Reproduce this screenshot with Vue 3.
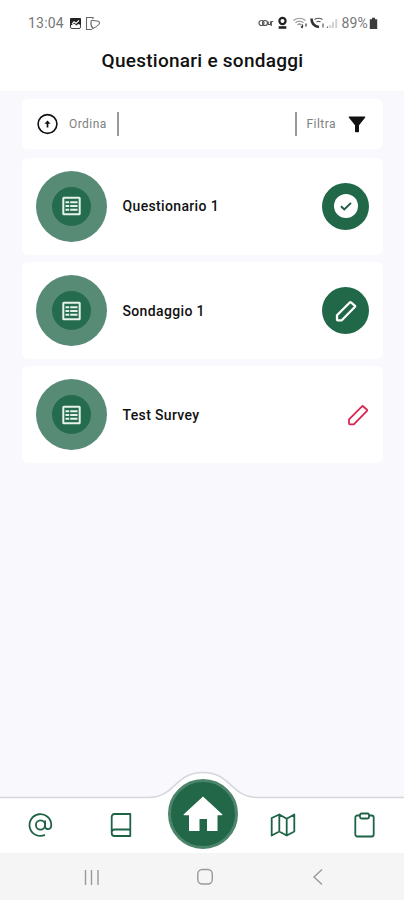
<script setup>
const surveys = [
  { id: 1, name: 'Questionario 1', status: 'done' },
  { id: 2, name: 'Sondaggio 1', status: 'open' },
  { id: 3, name: 'Test Survey', status: 'expired' }
]
</script>

<template>
  <div class="screen">
    <header class="top">
      <div class="status-bar">
        <div class="status-left">
          <span>13:04</span>
          <svg class="picture-icon" width="13" height="13" viewBox="0 0 13 13">
            <rect x="1.500" y="1.500" width="10" height="10" rx="1.500" fill="#fff" stroke="#444" />
            <path d="M1 2q0-1 1-1h9q1 0 1 1v6L9 7 7.500 8.500 5 6.500 1 9z" fill="#222" />
            <path d="M3 7 5 4.800l2 1.500 3-2.800" fill="none" stroke="#fff" stroke-width="1.100" />
          </svg>
          <svg class="cast-icon" width="16" height="15" viewBox="0 0 16 15" fill="none" stroke="#666" stroke-width="1.1">
            <path d="M8 3V1.500H1.500v12H7" />
            <path d="M6 5.500Q6.500 3.500 9.500 4.800Q14.500 4.500 14.500 7Q14 9.500 8 12.500Q5.500 10 6 5.500z" />
          </svg>
        </div>
        <div class="status-right">
          <svg width="80" height="14" viewBox="0 0 80 14" fill="none" stroke="#555" stroke-width="1.2">
            <ellipse cx="3.500" cy="7" rx="2.500" ry="2.500" />
            <ellipse cx="7" cy="7" rx="2.500" ry="2.500" />
            <path d="M10.200 5.500v3h2.300v-3M13.300 10V5.500h2" />
            <circle cx="24.500" cy="5" r="3.100" stroke="#222" stroke-width="2.200" />
            <path d="M20.700 11.500h7.600" stroke="#222" stroke-width="2.600" />
            <path d="M35.500 4.500q6-4.500 12 0M37.500 6.700q4-3.200 8 0M39.500 9q2-2 4 0" stroke="#999" />
            <path d="M44.500 8.500v3M43 10.500l1.500 1.500M48 10.500V7.500" stroke="#333" />
            <path d="M53.500 2.500q0 7.500 7.500 8.500" stroke="#333" stroke-width="2.600" />
            <path d="M56.500 3.500q4-2.500 8 0M58.500 6q2-1.500 4 0M65 7.500v4" stroke="#555" />
            <path d="M69.500 12v-1.500" stroke="#666" />
            <path d="M72.300 12V9M75 12V6M78.300 12V3" stroke="#d2d2d2" stroke-width="2" />
          </svg>
          <span>89%</span>
          <svg width="9" height="13" viewBox="0 0 9 13">
            <path d="M3 .8h3v1.500h2.200V12H.8V2.300H3z" fill="#3c3c3c" />
          </svg>
        </div>
      </div>
      <h1>Questionari e sondaggi</h1>
    </header>

    <main>
      <div class="toolbar">
        <div class="tool tool-sort">
          <svg width="22" height="22" viewBox="0 0 22 22" fill="none" stroke="#111" stroke-width="1.6">
            <circle cx="11.500" cy="11" r="9.400" />
            <path d="M11.500 14.500V9" stroke-width="1.700" />
            <path d="M8.500 10.800 11.500 7.500l3 3.300z" fill="#111" stroke="none" />
          </svg>
          <span>Ordina</span>
          <i class="divider"></i>
        </div>
        <div class="tool tool-filter">
          <i class="divider"></i>
          <span>Filtra</span>
          <svg width="18" height="17" viewBox="0 0 18 17">
            <path d="M1 .5h16q.7.6 0 1.300L11 9.200v6.300q0 .8-.8.800H7.800q-.8 0-.8-.800V9.200L1 1.800Q.3 1.100 1 .5z" fill="#111" />
          </svg>
        </div>
      </div>

      <div v-for="survey in surveys" :key="survey.id" class="card">
        <div class="badge">
          <div class="badge-inner">
            <svg width="20" height="20" viewBox="0 0 20 20" fill="none" stroke="#e6f2eb">
              <rect x="1.300" y="1.800" width="16.400" height="16.400" rx=".5" stroke-width="2" />
              <path d="M3.500 6.200h3.700M3.500 10h3.700M3.500 13.800h3.700M8.200 6.200h7.300M8.200 10h7.300M8.200 13.800h7.300" stroke-width="2" />
            </svg>
          </div>
        </div>
        <span class="name">{{ survey.name }}</span>
        <div class="state" :class="survey.status">
          <svg v-if="survey.status === 'done'" width="24" height="24" viewBox="0 0 24 24">
            <circle cx="12" cy="12" r="12" fill="#fff" />
            <path d="m7 12.300 3.300 3.200L17 8.800" fill="none" stroke="#1c5c42" stroke-width="1.900" />
          </svg>
          <svg v-else width="22" height="22" viewBox="0 0 22 22" fill="none" stroke="currentColor" stroke-linejoin="round">
            <path d="M2 19.500V15.300L15 2.300q.5-.5 1 0l4 3.500q.5.500 0 1L6.800 20.300H2.800q-.8 0-.8-.8z" />
          </svg>
        </div>
      </div>
    </main>

    <nav class="tabs">
      <svg class="tabs-shape" width="404" height="82" viewBox="0 0 404 82">
        <path
          d="M-2 26.500H148C176 26.500 174 1.500 203 1.500S230 26.500 258 26.500H406V84H-2z"
          fill="#fff"
          stroke="#d6d6dc"
          stroke-width="1.500"
        />
      </svg>
      <a class="tab">
        <svg width="26" height="26" viewBox="0 0 26 26">
          <circle cx="13.500" cy="13" r="4.600" />
          <path d="M18.100 8.500v5.700c0 4 6.200 4.200 6.200-1.200A10.900 10.900 0 1 0 18 22.900" />
        </svg>
      </a>
      <a class="tab">
        <svg width="26" height="26" viewBox="0 0 26 26">
          <path d="M22.300 17.500V2H6.500Q3.700 2 3.700 5V21Q3.700 24 6.500 24H22.300V17.500H6.500Q3.700 17.500 3.700 20.500" />
        </svg>
      </a>
      <a class="home">
        <svg width="40" height="36" viewBox="0 0 40 36">
          <path d="M20 .5 39.500 18.500q.2.800-.8.800h-4.200V35H24V23h-7.500v12H6V19.300H1.300q-1 0-.8-.8z" fill="#fff" />
        </svg>
      </a>
      <a class="tab">
        <svg width="26" height="26" viewBox="0 0 26 26">
          <path d="M1.700 6 9.300 2.500l7.400 4.300L24.300 2.500V19.500L16.700 23.500 9.300 19.500 1.700 23.500zM9.300 2.500v17M16.700 6.800v16.700" />
        </svg>
      </a>
      <a class="tab">
        <svg width="26" height="26" viewBox="0 0 26 26">
          <rect x="4.300" y="3.500" width="18.400" height="21" rx="2" />
          <rect x="9" y="1.500" width="9" height="5" rx="1.500" fill="#fff" />
        </svg>
      </a>
    </nav>

    <footer class="system-bar">
      <svg width="16" height="18" viewBox="0 0 16 18"><path d="M1.500 2v15M7.500 2v15M14 2v15" /></svg>
      <svg width="18" height="18" viewBox="0 0 18 18"><rect x=".8" y="1.500" width="14.500" height="14.500" rx="4.500" /></svg>
      <svg width="12" height="18" viewBox="0 0 12 18"><path d="M10 1.500 2 9l8 7.500" /></svg>
    </footer>
  </div>
</template>

<style>
body {
  margin: 0;
}
</style>

<style scoped>
.screen {
  display: flex;
  flex-direction: column;
  width: 404px;
  height: 900px;
  overflow: hidden;
  background: #f8f8fd;
  font-family: Roboto, 'Liberation Sans', sans-serif;
  color: #111;
}

.top {
  height: 91px;
  background: #fff;
}

.status-bar {
  display: flex;
  justify-content: space-between;
  box-sizing: border-box;
  height: 46px;
  padding: 0 26px 0 28px;
  font-size: 14px;
  letter-spacing: 0.2px;
  color: #777;
}

.status-left,
.status-right {
  display: flex;
  align-items: center;
}

.picture-icon {
  margin-left: 5px;
}

.cast-icon {
  margin-left: 3px;
}

.status-right span {
  margin: 0 1px 0 3px;
}

h1 {
  margin: 3px 0 0 1px;
  text-align: center;
  font-size: 19px;
  font-weight: 500;
  line-height: 24px;
  letter-spacing: 0.26px;
}

main {
  flex: 1;
  padding: 8px 21px 0 22px;
}

.toolbar,
.card {
  display: flex;
  align-items: center;
  box-sizing: border-box;
  border-radius: 6px;
  background: #fff;
}

.toolbar {
  justify-content: space-between;
  height: 50px;
  padding: 0 17px 0 14px;
  margin-bottom: 8.9px;
}

.tool {
  display: flex;
  align-items: center;
  font-size: 12px;
  letter-spacing: 0.45px;
  color: #808080;
}

.tool-sort span {
  margin: 0 10px 0 11px;
}

.tool-filter span {
  margin: 0 12px 0 10px;
}

.divider {
  width: 2px;
  height: 24px;
  background: #999;
}

.card {
  height: 97px;
  margin-bottom: 7.3px;
  padding: 0 14px;
}

.badge,
.badge-inner,
.state,
.home {
  display: flex;
  align-items: center;
  justify-content: center;
  border-radius: 50%;
}

.badge {
  width: 71px;
  height: 71px;
  background: #578b75;
}

.badge-inner {
  width: 39px;
  height: 39px;
  background: #256b4e;
}

.name {
  flex: 1;
  margin-left: 15.5px;
  font-size: 14px;
  font-weight: 500;
  letter-spacing: 0.35px;
}

.state {
  width: 47px;
  height: 47px;
  background: #216848;
  color: #fff;
}

.state.open {
  stroke-width: 2.3;
}

.state.expired {
  justify-content: flex-end;
  border-radius: 0;
  background: none;
  color: #d92752;
  stroke-width: 1.8;
}

.tabs {
  position: relative;
  display: flex;
  align-items: flex-end;
  height: 82px;
}

.tabs-shape {
  position: absolute;
  inset: 0;
}

.tab {
  position: relative;
  display: flex;
  flex: 1;
  align-items: center;
  justify-content: center;
  height: 57px;
}

.tab svg {
  fill: none;
  stroke: #1d6346;
  stroke-width: 1.8;
  stroke-linejoin: round;
}

.home {
  position: relative;
  box-sizing: border-box;
  width: 70px;
  height: 70px;
  margin: 0 5px 4.5px 6px;
  border: 3px solid #4d846c;
  background: #226748;
}

.system-bar {
  display: flex;
  align-items: center;
  justify-content: space-between;
  box-sizing: border-box;
  height: 47px;
  padding: 0 80px 0 84px;
  background: #f5f5f5;
}

.system-bar svg {
  fill: none;
  stroke: #999;
  stroke-width: 1.4;
}
</style>
